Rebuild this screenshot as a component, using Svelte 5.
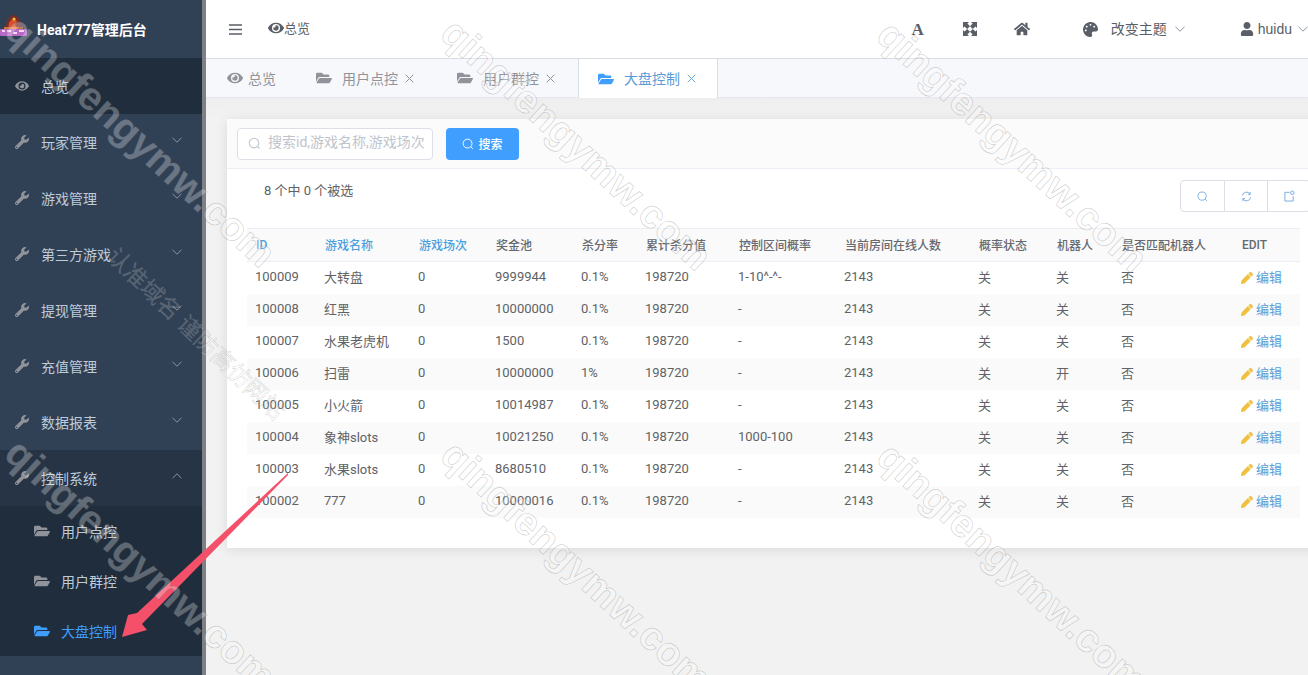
<script>
	const icons = {
		eye: ['0 0 576 512', 'M572.52 241.4C518.29 135.59 410.93 64 288 64S57.68 135.64 3.48 241.41a32.35 32.35 0 0 0 0 29.19C57.71 376.41 165.07 448 288 448s230.32-71.64 284.52-177.41a32.35 32.35 0 0 0 0-29.19zM288 400a144 144 0 1 1 144-144 143.93 143.93 0 0 1-144 144zm0-240a95.31 95.31 0 0 0-25.31 3.79 47.85 47.85 0 0 1-66.9 66.9A95.78 95.78 0 1 0 288 160z'],
		wrench: ['0 0 512 512', 'M507.73 109.1c-2.24-9.03-13.54-12.09-20.12-5.51l-74.36 74.36-67.88-11.31-11.31-67.88 74.36-74.36c6.62-6.62 3.43-17.9-5.66-20.16-47.38-11.74-99.55.91-136.58 37.93-39.64 39.64-50.55 97.1-34.05 147.2L18.74 402.76c-24.99 24.99-24.99 65.51 0 90.5 24.99 24.99 65.51 24.99 90.5 0l213.21-213.21c50.12 16.71 107.47 5.68 147.37-34.22 37.07-37.07 49.7-89.32 37.91-136.73zM64 472c-13.25 0-24-10.75-24-24 0-13.26 10.75-24 24-24s24 10.74 24 24c0 13.25-10.75 24-24 24z'],
		folder: ['0 0 576 512', 'M572.694 292.093L500.27 416.248A63.997 63.997 0 0 1 444.989 448H45.025c-18.523 0-30.064-20.093-20.731-36.093l72.424-124.155A64 64 0 0 1 152 256h399.964c18.523 0 30.064 20.093 20.73 36.093zM152 224h328v-48c0-26.51-21.49-48-48-48H272l-64-64H48C21.49 64 0 85.49 0 112v278.046l69.077-118.418C86.214 242.25 117.989 224 152 224z'],
		home: ['0 0 576 512', 'M280.37 148.26L96 300.11V464a16 16 0 0 0 16 16l112.06-.29a16 16 0 0 0 15.92-16V368a16 16 0 0 1 16-16h64a16 16 0 0 1 16 16v95.64a16 16 0 0 0 16 16.05L464 480a16 16 0 0 0 16-16V300L295.67 148.26a12.19 12.19 0 0 0-15.3 0zM571.6 251.47L488 182.56V44.05a12 12 0 0 0-12-12h-56a12 12 0 0 0-12 12v72.61L318.47 43a48 48 0 0 0-61 0L4.34 251.47a12 12 0 0 0-1.6 16.9l25.5 31A12 12 0 0 0 45.15 301l235.22-193.74a12.19 12.19 0 0 1 15.3 0L530.9 301a12 12 0 0 0 16.9-1.6l25.5-31a12 12 0 0 0-1.7-16.93z'],
		palette: ['0 0 512 512', 'M204.3 5C104.9 24.4 24.8 104.3 5.2 203.4c-37 187 131.7 326.4 258.8 306.7 41.2-6.4 61.4-54.6 42.5-91.7-23.1-45.4 9.9-98.4 60.9-98.4h79.7c35.8 0 64.8-29.6 64.9-65.3C511.5 97.1 368.1-26.9 204.3 5zM96 320c-17.7 0-32-14.3-32-32s14.3-32 32-32 32 14.3 32 32-14.3 32-32 32zm32-128c-17.7 0-32-14.3-32-32s14.3-32 32-32 32 14.3 32 32-14.3 32-32 32zm128-64c-17.7 0-32-14.3-32-32s14.3-32 32-32 32 14.3 32 32-14.3 32-32 32zm128 64c-17.7 0-32-14.3-32-32s14.3-32 32-32 32 14.3 32 32-14.3 32-32 32z'],
		user: ['0 0 448 512', 'M224 256c70.7 0 128-57.3 128-128S294.7 0 224 0 96 57.3 96 128s57.3 128 128 128zm89.6 32h-16.7c-22.2 10.2-46.9 16-72.9 16s-50.6-5.8-72.9-16h-16.7C60.2 288 0 348.2 0 422.4V464c0 26.5 21.5 48 48 48h352c26.5 0 48-21.5 48-48v-41.6c0-74.2-60.2-134.4-134.4-134.4z'],
		pencil: ['0 0 512 512', 'M497.9 142.1l-46.1 46.1c-4.7 4.7-12.3 4.7-17 0l-111-111c-4.7-4.7-4.7-12.3 0-17l46.1-46.1c18.7-18.7 49.1-18.7 67.9 0l60.1 60.1c18.8 18.7 18.8 49.1 0 68zM284.2 99.8L21.6 362.4.4 483.9c-2.9 16.4 11.4 30.6 27.8 27.8l121.5-21.3 262.6-262.6c4.7-4.7 4.7-12.3 0-17l-111-111c-4.8-4.7-12.4-4.7-17.1 0z'],
		expand: ['0 0 14 14', 'M0 0h6L4.4 1.6 7 4.2 4.2 7 1.6 4.4 0 6zM14 0v6l-1.6-1.6L9.8 7 7 4.2 9.6 1.6 8 0zM0 14V8l1.6 1.6L4.2 7 7 9.8 4.4 12.4 6 14zM14 14H8l1.600-1.600L7 9.800 9.800 7l2.600 2.600L14 8z']
	};

	const menus = ['玩家管理', '游戏管理', '第三方游戏', '提现管理', '充值管理', '数据报表'];
	const subMenus = [
		{ name: '用户点控' },
		{ name: '用户群控' },
		{ name: '大盘控制', active: true }
	];
	const tabs = [
		{ name: '用户点控', w: 141 },
		{ name: '用户群控', w: 141 },
		{ name: '大盘控制', w: 140, active: true }
	];
	const columns = [
		{ name: 'ID', w: 69, sort: true },
		{ name: '游戏名称', w: 94, sort: true },
		{ name: '游戏场次', w: 77, sort: true },
		{ name: '奖金池', w: 86 },
		{ name: '杀分率', w: 64 },
		{ name: '累计杀分值', w: 93 },
		{ name: '控制区间概率', w: 106 },
		{ name: '当前房间在线人数', w: 134 },
		{ name: '概率状态', w: 78 },
		{ name: '机器人', w: 65 },
		{ name: '是否匹配机器人', w: 120 },
		{ name: 'EDIT', w: 67 }
	];
	const rows = [
		['100009', '大转盘', '0', '9999944', '0.1%', '198720', '1-10^-^-', '2143', '关', '关', '否'],
		['100008', '红黑', '0', '10000000', '0.1%', '198720', '-', '2143', '关', '关', '否'],
		['100007', '水果老虎机', '0', '1500', '0.1%', '198720', '-', '2143', '关', '关', '否'],
		['100006', '扫雷', '0', '10000000', '1%', '198720', '-', '2143', '关', '开', '否'],
		['100005', '小火箭', '0', '10014987', '0.1%', '198720', '-', '2143', '关', '关', '否'],
		['100004', '象神slots', '0', '10021250', '0.1%', '198720', '1000-100', '2143', '关', '关', '否'],
		['100003', '水果slots', '0', '8680510', '0.1%', '198720', '-', '2143', '关', '关', '否'],
		['100002', '777', '0', '10000016', '0.1%', '198720', '-', '2143', '关', '关', '否']
	];
	// where each watermark tile starts
	const marks = [
		[12, 3], [448, 6], [884, 8],
		[12, 426], [448, 428], [884, 430]
	];
</script>

{#snippet icon(name, size, cls = '')}
	<svg class="icon {cls}" width={size} height={size} viewBox={icons[name][0]} aria-hidden="true">
		<path fill="currentColor" d={icons[name][1]} />
	</svg>
{/snippet}

{#snippet chevron(up = false)}
	<svg class="chevron" class:up width="10" height="6" viewBox="0 0 10 6" aria-hidden="true">
		<path d="M.5.8 5 5.2 9.5.8" fill="none" stroke="currentColor" stroke-width="1" />
	</svg>
{/snippet}

{#snippet cross()}
	<svg class="cross" width="9" height="9" viewBox="0 0 9 9" aria-hidden="true">
		<path d="M.7.7l7.6 7.6M8.3.7.7 8.3" fill="none" stroke="currentColor" stroke-width="1" />
	</svg>
{/snippet}

{#snippet search(size)}
	<svg width={size} height={size} viewBox="0 0 14 14" aria-hidden="true">
		<circle cx="6.5" cy="6.5" r="5.2" fill="none" stroke="currentColor" stroke-width="1.1" />
		<path d="M10.3 10.3 12.6 12.6" stroke="currentColor" stroke-width="1.1" />
	</svg>
{/snippet}

<div class="layout">
	<aside class="sidebar">
		<div class="brand">
			<svg class="logo" width="27" height="24" viewBox="0 0 27 24" aria-hidden="true">
				<path d="M6 16C5 8 9 2 13 1c5 0 9 6 8 15z" fill="#7a2c2a" />
				<path d="M9 9c2-4 6-5 8-2l-2 4 3 5H8z" fill="#d9502a" />
				<circle cx="14" cy="5" r="1.600" fill="#f0c040" />
				<rect x="0" y="15" width="27" height="7" rx="1" fill="#b868c8" />
				<path d="M2 17h3M7 17h4M13 19h4M19 17h5" stroke="#ffd6f2" stroke-width="2" />
				<path d="M4 14h19" stroke="#f09040" stroke-width="1.500" />
			</svg>
			<span>Heat777管理后台</span>
		</div>
		<nav>
			<div class="menu-item active">
				{@render icon('eye', 14)}
				<span>总览</span>
			</div>
			{#each menus as name}
				<div class="menu-item">
					{@render icon('wrench', 14)}
					<span>{name}</span>
					{@render chevron()}
				</div>
			{/each}
			<div class="menu-item open">
				{@render icon('wrench', 14)}
				<span>控制系统</span>
				{@render chevron(true)}
			</div>
			<div class="submenu">
				{#each subMenus as item}
					<div class="sub-item" class:current={item.active}>
						{@render icon('folder', 16)}
						<span>{item.name}</span>
					</div>
				{/each}
			</div>
		</nav>
	</aside>

	<main class="main">
		<header class="navbar">
			<svg class="hamburger" width="13" height="11" viewBox="0 0 13 11" aria-hidden="true">
				<path d="M0 1h13M0 5.500h13M0 10h13" stroke="currentColor" stroke-width="1.600" />
			</svg>
			<div class="crumb">
				{@render icon('eye', 16)}
				<span>总览</span>
			</div>
			<div class="nav-right">
				<span class="font-btn">A</span>
				<span class="expand">{@render icon('expand', 14)}</span>
				<span class="home">{@render icon('home', 16)}</span>
				<span class="palette">{@render icon('palette', 15)}</span>
				<span class="theme">改变主题</span>
				<span class="arrow-a">{@render chevron()}</span>
				<span class="user">{@render icon('user', 14)}</span>
				<span class="username">huidu</span>
				<span class="arrow-b">{@render chevron()}</span>
			</div>
		</header>

		<div class="tabs">
			<div class="tab first">
				{@render icon('eye', 16)}
				<span>总览</span>
			</div>
			{#each tabs as tab}
				<div class="tab" class:selected={tab.active} style="width: {tab.w}px">
					{@render icon('folder', 16)}
					<span>{tab.name}</span>
					{@render cross()}
				</div>
			{/each}
		</div>

		<section class="content">
			<div class="card">
				<div class="filter">
					<div class="search-input">
						{@render search(13)}
						<span>搜索id,游戏名称,游戏场次</span>
					</div>
					<button class="search-btn">
						{@render search(12)}
						<span>搜索</span>
					</button>
				</div>
				<div class="summary">
					<span>8 个中 0 个被选</span>
					<div class="actions">
						<button>{@render search(11)}</button>
						<button>
							<svg width="11" height="11" viewBox="0 0 12 12" aria-hidden="true">
								<path d="M1.500 5A4.600 4.600 0 0 1 10 3.500M10.500 7A4.600 4.600 0 0 1 2 8.500M10 1v2.600H7.500M2 11V8.400h2.500" fill="none" stroke="currentColor" />
							</svg>
						</button>
						<button>
							<svg width="11" height="12" viewBox="0 0 12 12" aria-hidden="true">
								<path d="M6 2H1v9.500h9V6" fill="none" stroke="currentColor" />
								<circle cx="9" cy="2.500" r="1.900" fill="none" stroke="currentColor" />
							</svg>
						</button>
					</div>
				</div>
				<table>
					<colgroup>
						{#each columns as col}
							<col style="width: {col.w}px" />
						{/each}
					</colgroup>
					<thead>
						<tr>
							{#each columns as col}
								<th class:sort={col.sort}>{col.name}</th>
							{/each}
						</tr>
					</thead>
					<tbody>
						{#each rows as row}
							<tr>
								{#each row as cell}
									<td>{cell}</td>
								{/each}
								<td>
									<span class="edit">{@render icon('pencil', 12)}<span>编辑</span></span>
								</td>
							</tr>
						{/each}
					</tbody>
				</table>
			</div>
		</section>
	</main>

	<!-- screenshot annotation and watermark lie over the whole page -->
	<svg class="annotation" width="1308" height="675" viewBox="0 0 1308 675" aria-hidden="true">
		<polygon points="288,473 137,613 128,615 122,637 147,630 142,624 288,475" fill="#f4506a" />
	</svg>
	<div class="watermarks" aria-hidden="true">
		{#each marks as [x, y]}
			<span class="mark" style="left: {x}px; top: {y}px">qingfengymw.com</span>
		{/each}
		<span class="mark-small">认准域名 谨防高仿网站</span>
	</div>
</div>

<style>
	:global(body) {
		margin: 0;
		font-family: Roboto, 'Noto Sans CJK SC', sans-serif;
	}

	.layout {
		position: relative;
		display: flex;
		width: 1308px;
		height: 675px;
		overflow: hidden;
		background: #f0f2f5;
	}

	.icon {
		flex: none;
		display: block;
	}

	.sidebar {
		flex: none;
		width: 202px;
		border-right: 4px solid #7d8084;
		background: #304156;
		color: #bfcbd9;
		font-size: 14px;
	}

	.brand {
		display: flex;
		align-items: center;
		height: 58px;
		color: #fff;
		font-size: 14px;
		font-weight: 700;
	}

	.logo {
		flex: none;
		margin: -6px 10px 0 0;
	}

	.menu-item {
		display: flex;
		align-items: center;
		height: 56px;
		padding: 0 20px 0 15px;
		box-sizing: border-box;
	}

	.menu-item span {
		flex: 1;
		margin-left: 12px;
	}

	.menu-item .icon {
		color: #909399;
	}

	.menu-item .chevron {
		margin-top: -4px;
	}

	.menu-item.active {
		background: #1f2d3d;
	}

	.menu-item.open {
		background: #263445;
	}

	.chevron {
		display: block;
		flex: none;
		color: #8a94a3;
	}

	.chevron.up {
		transform: rotate(180deg);
	}

	.submenu {
		background: #1f2d3d;
	}

	.sub-item {
		display: flex;
		align-items: center;
		gap: 11px;
		height: 50px;
		padding-left: 34px;
	}

	.sub-item span {
		margin-top: -1px;
	}

	.sub-item .icon {
		color: #909399;
	}

	.sub-item.current,
	.sub-item.current .icon {
		color: #409eff;
	}

	.main {
		flex: 1;
		min-width: 0;
		display: flex;
		flex-direction: column;
	}

	.navbar {
		display: flex;
		align-items: center;
		height: 58px;
		flex: none;
		background: #fff;
		border-bottom: 1px solid #d8dce5;
		color: #5a5e66;
		font-size: 13px;
	}

	.hamburger {
		margin-left: 23px;
		color: #5a5e66;
	}

	.crumb {
		display: flex;
		align-items: center;
		margin: -3px 0 0 26px;
	}

	.nav-right {
		display: flex;
		align-items: center;
		margin-left: auto;
		color: #5a5e66;
	}

	.font-btn {
		font-family: 'Liberation Serif', serif;
		font-size: 17px;
		font-weight: 700;
		line-height: 1;
	}

	.expand {
		margin-left: 39px;
	}

	.home {
		margin-left: 37px;
	}

	.palette {
		margin-left: 53px;
	}

	.theme {
		margin: -2px 0 0 13px;
		font-size: 14px;
	}

	.arrow-a {
		margin-left: 8px;
		padding-right: 1px;
	}

	.user {
		margin-left: 54px;
	}

	.username {
		margin-left: 4px;
		font-family: 'Liberation Sans', sans-serif;
		font-size: 14px;
	}

	.arrow-b {
		margin: 0 0 0 6px;
	}

	.tabs {
		display: flex;
		flex: none;
		height: 38px;
		padding-left: 1px;
		background: #f7f8fb;
		border-bottom: 1px solid #e4e7ed;
		box-sizing: content-box;
		color: #909399;
		font-size: 14px;
	}

	.tab {
		display: flex;
		align-items: center;
		gap: 10px;
		padding-left: 20px;
		box-sizing: border-box;
	}

	.tab span {
		margin-top: -1px;
	}

	.tab.first {
		gap: 5px;
		width: 89px;
	}

	.tab .cross {
		margin-left: -3px;
	}

	.tab.selected {
		margin-bottom: -1px;
		background: #fff;
		border-left: 1px solid #d8dce5;
		border-right: 1px solid #d8dce5;
		padding-left: 19px;
		color: #6aa6e0;
	}

	.tab.selected .icon {
		color: #409eff;
	}

	.tab.selected span {
		color: #5a9bd8;
	}

	.content {
		flex: 1;
		padding: 21px;
		background: linear-gradient(#eeeeee, #f2f2f2 21px);
	}

	.card {
		width: 1095px;
		height: 429px;
		background: #fff;
		box-shadow: 0 2px 12px rgba(0, 0, 0, 0.1);
		color: #606266;
		font-size: 13px;
	}

	.filter {
		display: flex;
		align-items: center;
		gap: 13px;
		height: 50px;
		padding: 0 10px;
		background: #fbfbfb;
		border-bottom: 1px solid #ebeef5;
		box-sizing: border-box;
	}

	.search-input {
		display: flex;
		align-items: center;
		gap: 7px;
		width: 196px;
		height: 32px;
		padding-left: 10px;
		border: 1px solid #dcdfe6;
		border-radius: 4px;
		background: #fff;
		box-sizing: border-box;
		color: #c0c4cc;
		font-size: 14px;
		white-space: nowrap;
		overflow: hidden;
	}

	.search-input span {
		margin-top: -5px;
	}

	.search-btn {
		display: flex;
		align-items: center;
		justify-content: center;
		gap: 4px;
		width: 73px;
		height: 32px;
		padding: 0;
		border: 0;
		border-radius: 4px;
		background: #409eff;
		color: #fff;
		font: inherit;
		font-size: 12px;
		font-weight: 500;
	}

	.search-btn span {
		margin-top: -1px;
	}

	.summary {
		display: flex;
		justify-content: space-between;
		height: 59px;
		padding: 11px 11px 0 37px;
		box-sizing: border-box;
		line-height: 22px;
	}

	.actions {
		display: flex;
		height: 32px;
		border: 1px solid #dcdfe6;
		border-radius: 4px;
		background: #fff;
		box-sizing: border-box;
	}

	.actions button {
		display: flex;
		align-items: center;
		justify-content: center;
		width: 43px;
		padding: 0;
		border: 0;
		border-left: 1px solid #dcdfe6;
		background: none;
		color: #6fa8dc;
	}

	.actions button:first-child {
		border-left: 0;
	}

	table {
		width: 1053px;
		margin-left: 20px;
		border-collapse: collapse;
		table-layout: fixed;
	}

	th {
		height: 33px;
		padding: 0 0 1px 9px;
		box-sizing: border-box;
		background: #fafafa;
		border-top: 1px solid #ebeef5;
		border-bottom: 1px solid #ebeef5;
		color: #66696f;
		font-size: 12px;
		font-weight: 500;
		text-align: left;
		white-space: nowrap;
	}

	th.sort {
		color: #4a9fe0;
	}

	td {
		height: 32px;
		padding: 0 0 2px 8px;
		box-sizing: border-box;
		white-space: nowrap;
	}

	tbody tr:nth-child(even) td {
		background: #fafafa;
	}

	.edit {
		display: inline-flex;
		align-items: center;
		gap: 3px;
		color: #5a9fd8;
	}

	.edit .icon {
		margin-top: 3px;
		color: #f0c040;
	}

	.annotation,
	.watermarks {
		position: absolute;
		inset: 0;
		pointer-events: none;
	}

	.mark,
	.mark-small {
		position: absolute;
		transform-origin: left center;
		color: rgba(255, 255, 255, 0.28);
		white-space: nowrap;
		-webkit-text-stroke: 0.7px rgba(110, 110, 110, 0.32);
	}

	.mark {
		transform: rotate(42.5deg);
		font-family: 'Liberation Sans', sans-serif;
		font-size: 40px;
		font-weight: 700;
		line-height: 1;
	}

	.mark-small {
		left: 110px;
		top: 238px;
		transform: rotate(43.8deg);
		color: rgba(255, 255, 255, 0.2);
		font-size: 23px;
		line-height: 30px;
		-webkit-text-stroke: 0.5px rgba(110, 110, 110, 0.3);
	}
</style>
